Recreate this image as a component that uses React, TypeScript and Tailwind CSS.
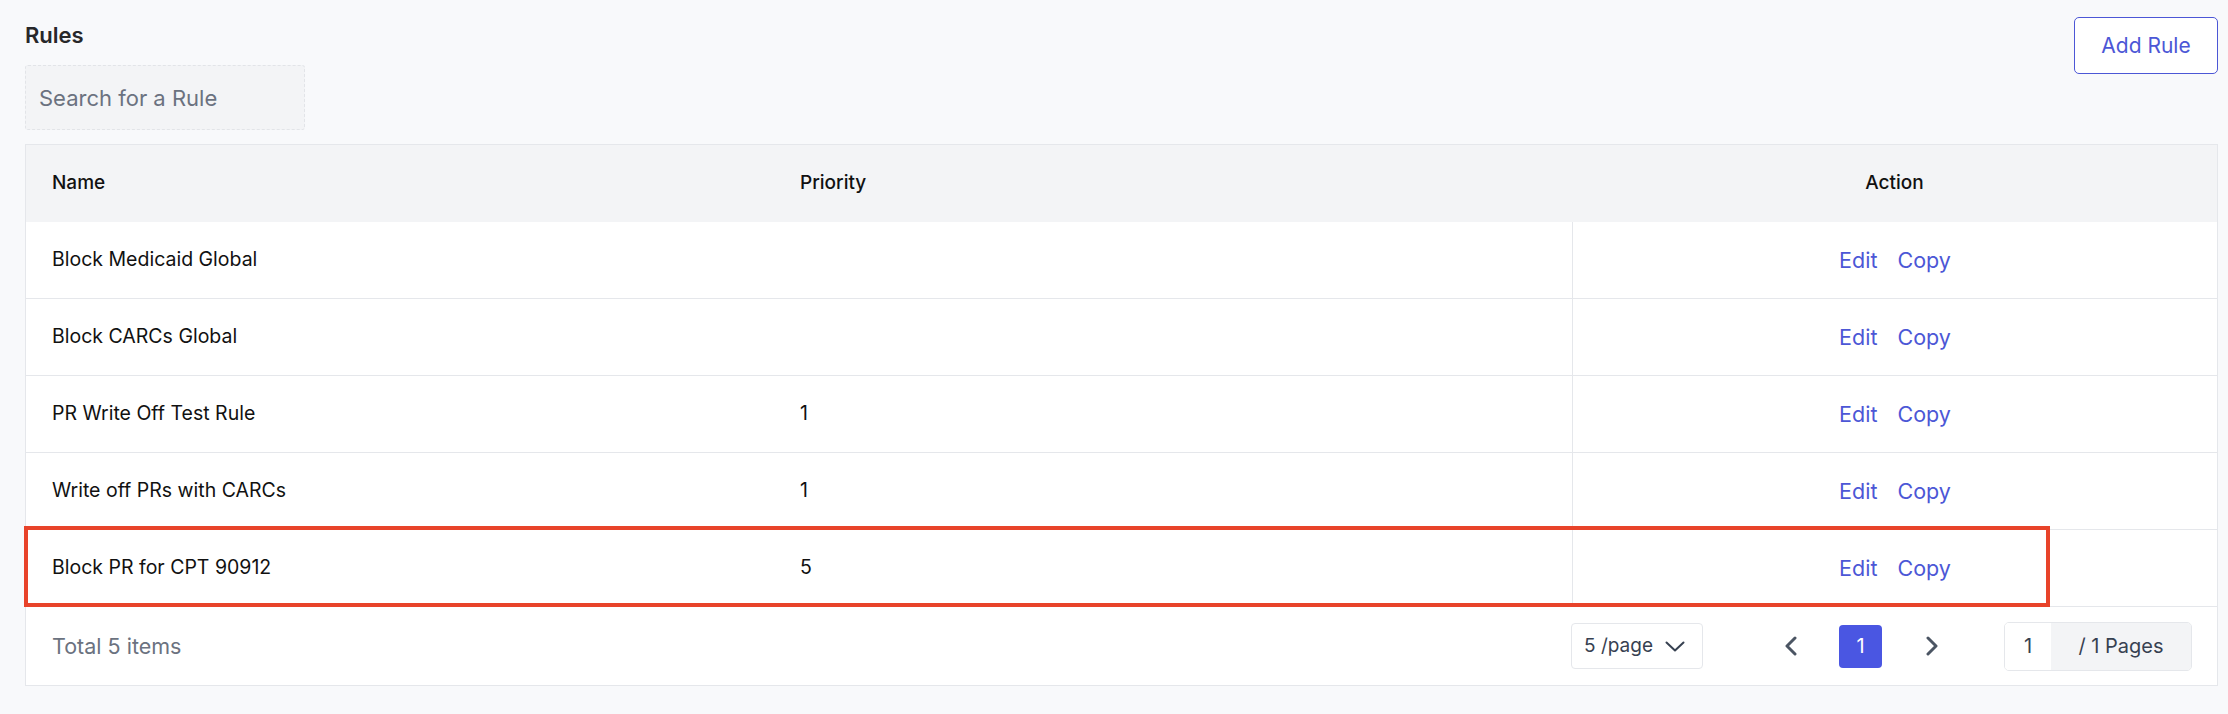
import React from "react";

type Rule = {
  id: number;
  name: string;
  priority?: number;
};

const rules: Rule[] = [
  { id: 1, name: "Block Medicaid Global" },
  { id: 2, name: "Block CARCs Global" },
  { id: 3, name: "PR Write Off Test Rule", priority: 1 },
  { id: 4, name: "Write off PRs with CARCs", priority: 1 },
  { id: 5, name: "Block PR for CPT 90912", priority: 5 },
];

function ChevronDown() {
  return (
    <svg width="20" height="11" viewBox="0 0 20 11" fill="none">
      <polyline points="1.5,1.5 10,9.5 18.5,1.5" stroke="#374151" strokeWidth="2" strokeLinecap="round" strokeLinejoin="round" />
    </svg>
  );
}

function Arrow({ dir }: { dir: "left" | "right" }) {
  return (
    <svg width="14" height="20" viewBox="0 0 14 20" fill="none">
      {dir === "left" ? (
        <polyline points="11,2 3,10 11,18" stroke="#4b5563" strokeWidth="3" strokeLinecap="round" strokeLinejoin="round" />
      ) : (
        <polyline points="3,2 11,10 3,18" stroke="#4b5563" strokeWidth="3" strokeLinecap="round" strokeLinejoin="round" />
      )}
    </svg>
  );
}

export default function App() {
  return (
    <main className="min-h-screen bg-[#f8f9fb] pl-[25px] pr-[10px] pt-[17px] font-['Inter',sans-serif] text-[#111827]">
      <div className="flex items-start justify-between">
        <div>
          <h1 className="mt-[3px] text-[22px] font-semibold leading-[30px] text-[#27272a]">
            Rules
          </h1>
          <input
            placeholder="Search for a Rule"
            className="mt-[15px] h-[65px] w-[280px] rounded-[3px] border border-dashed border-[#e2e4e8] bg-[#f3f4f6] px-[13px] text-[22px] text-[#374151] outline-none placeholder:text-[#6b7280]"
          />
        </div>

        <button className="h-[57px] w-[144px] rounded-[5px] border border-[#4c57d6] bg-white text-[21px] text-[#4c57d6]">
          Add Rule
        </button>
      </div>

      <div className="mt-[14px] border border-[#e5e7eb] bg-white">
        <div className="grid h-[77px] grid-cols-[748px_798px_1fr] items-center bg-[#f3f4f6] text-[19px] font-medium text-[#111]">
          <div className="pl-[26px]">Name</div>
          <div className="pl-[26px]">Priority</div>
          <div className="text-center">Action</div>
        </div>

        {rules.map((rule, i) => (
          <div
            key={rule.id}
            className="relative grid h-[77px] grid-cols-[748px_798px_1fr] border-b border-[#e5e7eb] text-[19.5px] text-[#111]"
          >
            <div className="flex items-center pl-[26px]">{rule.name}</div>
            <div className="flex items-center pl-[26px]">{rule.priority ?? ""}</div>
            <div className="flex items-center justify-center gap-[20px] border-l border-[#e5e7eb] text-[21.5px] text-[#4c57d6]">
              <span>Edit</span>
              <span>Copy</span>
            </div>

            {i === rules.length - 1 && (
              <div className="absolute left-[-2px] top-[-4px] h-[81px] w-[2026px] border-4 border-[#e8432a]" />
            )}
          </div>
        ))}

        <div className="flex h-[78px] items-center justify-between pl-[26px] pr-[25px]">
          <span className="text-[21.5px] text-[#6b7280]">Total 5 items</span>

          <div className="flex items-center">
            <div className="flex h-[46px] w-[132px] items-center justify-between rounded-[4px] border border-[#e5e7eb] pl-[12px] pr-[17px] text-[19px] text-[#374151]">
              <span>5 /page</span>
              <ChevronDown />
            </div>

            <div className="ml-[66px] flex h-[43px] w-[43px] items-center justify-center">
              <Arrow dir="left" />
            </div>

            <div className="ml-[27px] flex h-[43px] w-[43px] items-center justify-center rounded-[4px] bg-[#4a56e2] text-[20px] text-white">
              1
            </div>

            <div className="ml-[28px] flex h-[43px] w-[43px] items-center justify-center">
              <Arrow dir="right" />
            </div>

            <div className="ml-[51px] flex h-[49px] w-[188px] overflow-hidden rounded-[5px] border border-[#e5e7eb] text-[20px] text-[#374151]">
              <div className="flex w-[46px] items-center justify-center bg-white">1</div>
              <div className="flex flex-1 items-center justify-center bg-[#f3f4f6]">/ 1 Pages</div>
            </div>
          </div>
        </div>
      </div>
    </main>
  );
}
